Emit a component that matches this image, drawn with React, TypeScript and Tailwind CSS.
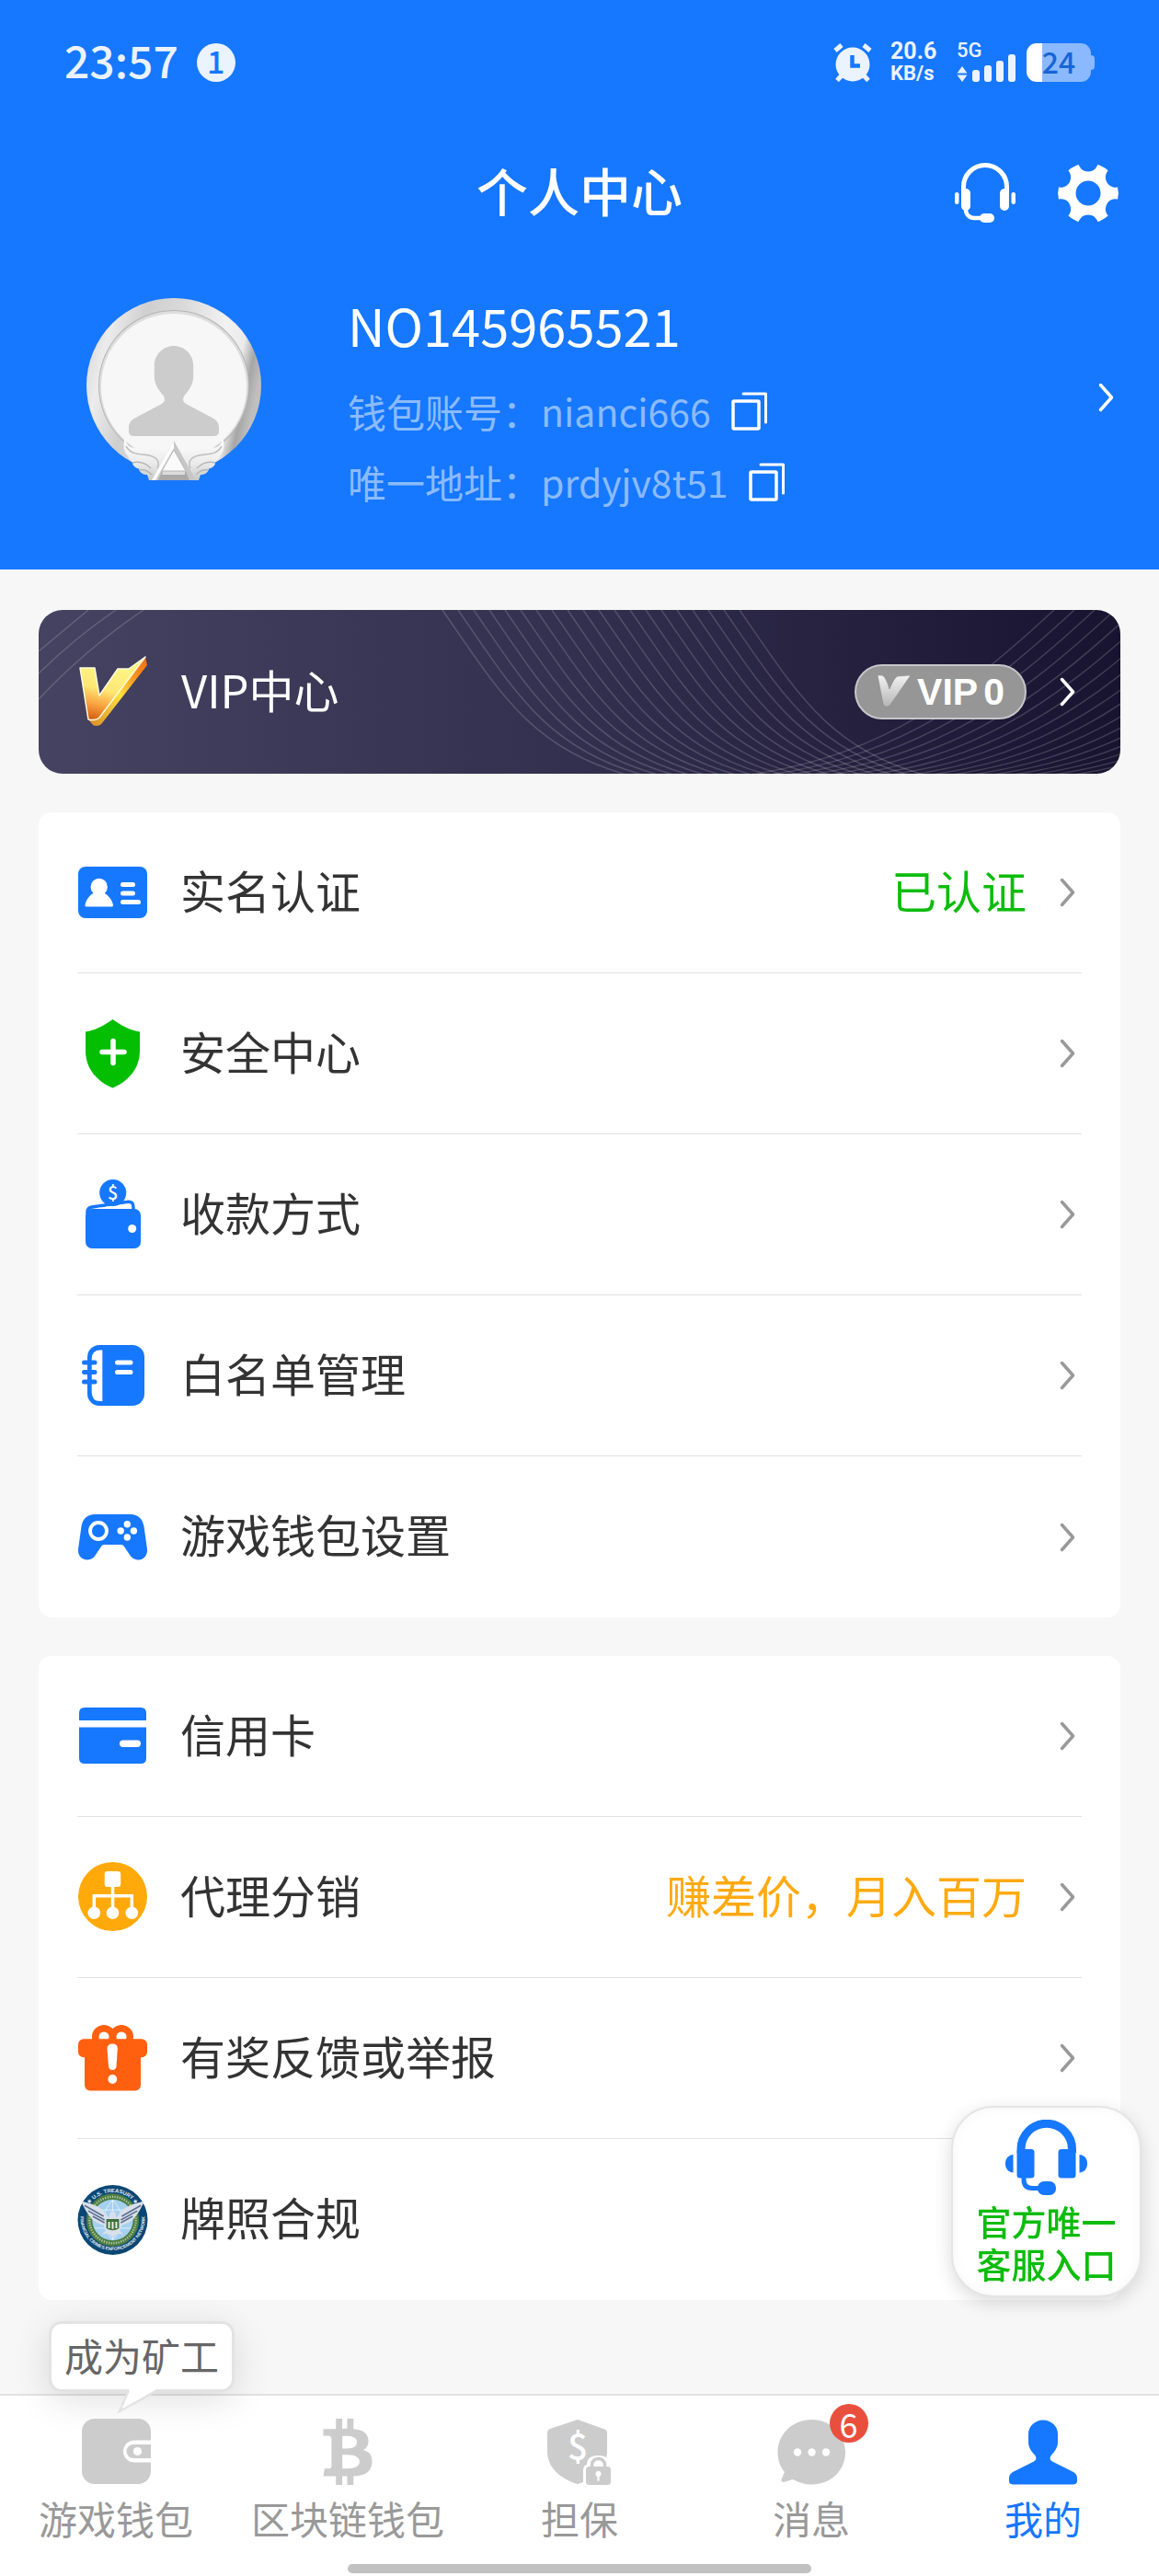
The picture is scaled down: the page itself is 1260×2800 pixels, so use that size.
import React from 'react';
import { FaBtc } from 'react-icons/fa';
import clsx from 'clsx';

interface MenuItem {
  id: string;
  label: string;
  icon: React.ReactNode;
  note?: string;
  noteClass?: string;
}

interface Tab {
  id: string;
  label: string;
  icon: React.ReactNode;
  badge?: number;
  active?: boolean;
}

const PERSON =
  'M37 0C28 0 21 7 21 15V24C21 30 25 35 28 38C30 41 30 43 27 45L5 56C1 58 0 61 0 63V66C0 69 2 70 5 70H69C72 70 74 69 74 66V63C74 61 73 58 69 56L47 45C44 43 44 41 46 38C49 35 53 30 53 24V15C53 7 46 0 37 0Z';

/* ---------- Status bar icons ---------- */

function AlarmIcon() {
  return (
    <svg width="42" height="42" viewBox="0 0 42 42" fill="none">
      <circle cx="21" cy="23" r="18.5" fill="#ebf3ff" />
      <path d="M2 8L9 2M40 8L33 2" stroke="#ebf3ff" strokeWidth="5" />
      <path d="M9 35L4 40.500M33 35L38 40.500" stroke="#ebf3ff" strokeWidth="5" />
      <path d="M20.500 13V24.500H29" stroke="#1677ff" strokeWidth="4.500" />
    </svg>
  );
}

function SignalIcon() {
  return (
    <svg width="64" height="30" viewBox="0 0 64 30" fill="#ebf3ff">
      <path d="M6 13L11.500 20.500H0.500Z" />
      <path d="M6 30L11.500 22.500H0.500Z" />
      <rect x="17" y="17" width="8" height="13" rx="3" />
      <rect x="30" y="12" width="8" height="18" rx="3" />
      <rect x="43" y="7" width="8" height="23" rx="3" />
      <rect x="56" y="0" width="8" height="30" rx="3" />
    </svg>
  );
}

/* ---------- Header icons ---------- */

function HeadsetIcon() {
  return (
    <svg width="66" height="66" viewBox="0 0 66 66" fill="#fff">
      <path d="M9.500 34V26A23.500 23.500 0 0 1 56.500 26V34" fill="none" stroke="#fff" strokeWidth="5" />
      <rect x="7" y="28" width="10" height="24" rx="5" />
      <rect x="49" y="28" width="10" height="24" rx="5" />
      <rect x="0" y="32" width="4.500" height="13" rx="2.200" />
      <rect x="61.500" y="32" width="4.500" height="13" rx="2.200" />
      <path d="M12 48V51A9 9 0 0 0 21 60H30" fill="none" stroke="#fff" strokeWidth="4.500" />
      <rect x="27" y="55" width="16" height="10" rx="5" />
    </svg>
  );
}

function GearIcon() {
  const valleys = [30, 90, 150, 210, 270, 330];
  return (
    <svg width="66" height="66" viewBox="-33 -33 66 66">
      <mask id="gear">
        <circle r="33" fill="#fff" />
        <circle r="13.500" fill="#000" />
        {valleys.map(a => (
          <circle key={a} cx="34.500" cy="0" r="11" fill="#000" transform={`rotate(${a})`} />
        ))}
      </mask>
      <circle r="33" fill="#fff" mask="url(#gear)" />
    </svg>
  );
}

function CopyIcon() {
  return (
    <svg width="40" height="42" viewBox="0 0 40 42" fill="none" stroke="#fff">
      <rect x="2" y="10" width="28" height="30" rx="1" strokeWidth="3.500" />
      <path d="M13 2H37.500V33" strokeWidth="3" strokeLinecap="round" strokeLinejoin="round" />
    </svg>
  );
}

function Chevron({ className }: { className?: string }) {
  return (
    <svg width="24" height="32" viewBox="0 0 24 32" fill="none" stroke="currentColor" strokeWidth="3.500" strokeLinecap="round" strokeLinejoin="round" className={clsx('shrink-0', className)}>
      <path d="M2.500 2.500L14.500 16L2.500 29.500" />
    </svg>
  );
}

function Avatar() {
  return (
    <svg width="190" height="200" viewBox="0 0 190 200" className="shrink-0">
      <defs>
        <linearGradient id="ring" x1="0" y1="0.2" x2="1" y2="0.42">
          <stop offset="0" stopColor="#d6d6d6" />
          <stop offset="0.12" stopColor="#ececec" />
          <stop offset="0.3" stopColor="#cfcfcf" />
          <stop offset="0.5" stopColor="#dadada" />
          <stop offset="0.75" stopColor="#f2f2f2" />
          <stop offset="0.87" stopColor="#ebebeb" />
          <stop offset="0.94" stopColor="#a6a6a6" />
          <stop offset="1" stopColor="#bfbfbf" />
        </linearGradient>
        <linearGradient id="wing" x1="0" y1="0" x2="0" y2="1">
          <stop offset="0" stopColor="#ffffff" />
          <stop offset="0.6" stopColor="#ebebeb" />
          <stop offset="1" stopColor="#c8c8c8" />
        </linearGradient>
      </defs>
      <circle cx="95" cy="95" r="95" fill="url(#ring)" />
      <circle cx="95" cy="95" r="82" fill="#b4b4b4" />
      <circle cx="95" cy="95" r="81" fill="#dedede" />
      <circle cx="95" cy="96" r="79" fill="#f7f7f7" />
      <svg x="46" y="52" width="98" height="98" viewBox="0 0 74 70" preserveAspectRatio="none">
        <path d={PERSON} fill="#ccc" />
      </svg>
      {/* blue gap under the ring, then the wings over it */}
      <path d="M44 175L68 199H122L146 175L138 200H52Z" fill="#1677ff" />
      <path d="M42 152C43 160 48 163 55 163L72 163C78 162 82 164 85 168L95 155L105 168C108 164 112 162 118 163L135 163C142 163 147 160 148 152C151 160 149 168 145 172C144 175 141 178 138 179H140C140 182 137 185 131 186H133C132 190 128 192 124 192L122 198H68L66 192C62 192 58 190 57 186H59C53 185 50 182 50 179H52C49 178 46 175 45 172C41 168 39 160 42 152Z" fill="url(#wing)" />
      <path d="M43 161C49 171 58 169 68 171C77 173 80 178 77 185M147 161C141 171 132 169 122 171C113 173 110 178 113 185" fill="none" stroke="#bdbdbd" strokeWidth="1.500" />
      <path d="M50 179C58 177 64 179 70 185M140 179C132 177 126 179 120 185M58 187C63 186 67 188 71 192M132 187C127 186 123 188 119 192" fill="none" stroke="#b5b5b5" strokeWidth="1.500" />
      <path d="M95 155L71 198H78L95 166L112 198H119Z" fill="#c6c6c6" />
      <path d="M95 155L71 198H75L95 163Z" fill="#fff" />
      <path d="M95 165L82 188H108Z" fill="#fafafa" stroke="#b9b9b9" strokeWidth="1" />
      <path d="M82 189H108L112 198H78Z" fill="#a9a9a9" />
      <path d="M83 189H107V192H82Z" fill="#dcdcdc" />
    </svg>
  );
}

/* ---------- VIP ---------- */

function VipWaves() {
  const left = Array.from({ length: 20 }, (_, i) => i * 17);
  const right = Array.from({ length: 17 }, (_, i) => i * 22);
  return (
    <svg viewBox="0 0 1176 178" preserveAspectRatio="none" fill="none" stroke="#fff" strokeOpacity="0.17" strokeWidth="1.500" className="absolute inset-0 h-full w-full">
      <path d="M54 0L0 45M84 0Q40 30 0 69M114 0Q52 42 0 97" />
      {left.map(x => (
        <path key={x} d={`M${439 + x} 0C${500 + x} 88 ${535 + x} 150 ${639 + x} 179`} />
      ))}
      {right.map(x => (
        <path key={x} d={`M${750 + x} 182C${900 + x} 165 ${985 + x} 110 ${1104 + x} 0`} />
      ))}
    </svg>
  );
}

function GoldV() {
  return (
    <svg width="76" height="78" viewBox="0 0 76 78" className="shrink-0">
      <defs>
        <linearGradient id="goldFace" x1="0.4" y1="0" x2="0.15" y2="1">
          <stop offset="0.15" stopColor="#fff383" />
          <stop offset="0.5" stopColor="#ffe774" />
          <stop offset="0.75" stopColor="#f9a13f" />
          <stop offset="1" stopColor="#d0590f" />
        </linearGradient>
        <linearGradient id="goldSide" x1="1" y1="0" x2="0" y2="1">
          <stop offset="0" stopColor="#ef6c12" />
          <stop offset="0.25" stopColor="#f8941f" />
          <stop offset="0.5" stopColor="#ffe03c" />
          <stop offset="1" stopColor="#d98a2a" />
        </linearGradient>
      </defs>
      <path d="M72 1L74 10L25 73C23 76 18 77 15 75L10 69L30 50Z" fill="url(#goldSide)" />
      <path d="M1 13H17L22 43L42 14H54L72 1L22 67C19 70 13 70 10 69Z" fill="url(#goldFace)" stroke="#fffbe0" strokeWidth="1.500" strokeLinejoin="round" />
    </svg>
  );
}

function SilverV() {
  return (
    <svg width="38" height="36" viewBox="0 0 38 36">
      <defs>
        <linearGradient id="silver" x1="0" y1="0" x2="0" y2="1">
          <stop offset="0" stopColor="#f2f2f2" />
          <stop offset="1" stopColor="#b5b5b5" />
        </linearGradient>
      </defs>
      <path d="M1 0H6C9 1 12 8 14 15C17 8 20 2 23 1L37 0L15 32C13 35 8 35 7 31Z" fill="url(#silver)" stroke="#808080" strokeWidth="0.500" />
    </svg>
  );
}

/* ---------- Menu icons ---------- */

const icons = {
  idCard: (
    <svg width="76" height="56" viewBox="0 0 76 56" fill="#fff">
      <rect width="75" height="56" rx="8" fill="#1677ff" />
      <circle cx="22.700" cy="22" r="9.200" />
      <path d="M18 28H27C33 31 37 36 38 42Q38 43.500 36.500 43.500H9Q7 43.500 7.500 42C8.500 36 12 31 18 28Z" />
      <rect x="46" y="17" width="16" height="5" rx="2.500" />
      <rect x="46" y="26.500" width="16" height="5" rx="2.500" />
      <rect x="46" y="36" width="22" height="5" rx="2.500" />
    </svg>
  ),
  shield: (
    <svg width="60" height="75" viewBox="0 0 60 75">
      <path d="M29.500 0C20 7 10 12 0 13.500V34C0 55 14 68 29.500 74.500C45 68 59 55 59 34V13.500C49 12 39 7 29.500 0Z" fill="#04be02" />
      <path d="M30 23.500V47.500M18 35.500H42" stroke="#fff" strokeWidth="5.500" strokeLinecap="round" />
    </svg>
  ),
  payment: (
    <svg width="60" height="76" viewBox="0 0 60 76" fill="#1677ff">
      <path d="M2 37V35.500C2 32 4 30.500 7 30L45 24.500C50 23.500 52 26 52 30V34" fill="none" stroke="#1677ff" strokeWidth="3.500" />
      <path d="M8 32L22 29L22 33H7Z" />
      <rect y="32" width="60" height="43" rx="7" />
      <path d="M8 32C10 31 20 30 24 29.500C30 31 36 28 38 27.500L45 26.500Q49 26 49 30V32Z" fill="#fff" />
      <circle cx="29.700" cy="14.500" r="14.500" />
      <text x="29.700" y="22" textAnchor="middle" fill="#fff" fontSize="20" fontWeight="500" fontFamily="Noto Sans CJK SC, sans-serif">$</text>
      <circle cx="50.700" cy="53.500" r="4.500" fill="#fff" />
    </svg>
  ),
  notebook: (
    <svg width="68" height="66" viewBox="0 0 68 66">
      <rect x="6" width="62" height="66" rx="13" fill="#1677ff" />
      <path d="M22.300 5.500V61H20Q10.700 61 10.700 51V15Q10.700 5.500 20 5.500Z" fill="#fff" />
      <path d="M2.500 19H14M2.500 29.600H14M2.500 40H14" stroke="#1677ff" strokeWidth="5" strokeLinecap="round" />
      <path d="M38.500 19H53M38.500 29.600H53" stroke="#fff" strokeWidth="5" strokeLinecap="round" />
    </svg>
  ),
  gamepad: (
    <svg width="76" height="50" viewBox="0 0 76 50" fill="#fff">
      <path d="M18 0H57C65 0 70 5 71.500 13L75 38C75.500 45 71 49.500 66 49.500C61 49.500 58 47 56 44L50 35C49 33.500 48 33 46.500 33H28.500C27 33 26 33.500 25 35L19 44C17 47 14 49.500 10 49.500C4 49.500 -0.500 45 0 38L3.500 13C5 5 10 0 18 0Z" fill="#1677ff" />
      <circle cx="22" cy="18" r="9" fill="none" stroke="#fff" strokeWidth="3.800" />
      <circle cx="53.300" cy="10.800" r="3.700" />
      <circle cx="53.300" cy="25" r="3.700" />
      <circle cx="46.200" cy="18" r="3.700" />
      <circle cx="60.400" cy="18" r="3.700" />
    </svg>
  ),
  creditCard: (
    <svg width="74" height="62" viewBox="0 0 74 62">
      <path d="M0 14V6Q0 0 6 0H67Q73 0 73 6V14Z" fill="#1677ff" />
      <path d="M0 21.500H73V55Q73 61 67 61H6Q0 61 0 55Z" fill="#1677ff" />
      <rect x="44" y="35.500" width="23" height="7.500" rx="3.700" fill="#fff" />
    </svg>
  ),
  agency: (
    <svg width="76" height="76" viewBox="0 0 76 76" fill="#fff">
      <circle cx="37.500" cy="37.500" r="37.500" fill="#ffaa0a" />
      <rect x="28.700" y="10" width="17.500" height="17" rx="3" />
      <path d="M37.500 26V50M17.300 50V36.700H58.300V50" fill="none" stroke="#fff" strokeWidth="3.500" />
      <circle cx="17.300" cy="55.300" r="6.800" />
      <circle cx="37.500" cy="55.300" r="6.800" />
      <circle cx="58.300" cy="55.300" r="6.800" />
    </svg>
  ),
  gift: (
    <svg width="76" height="72" viewBox="0 0 76 72">
      <circle cx="28" cy="13" r="9.300" fill="none" stroke="#ff6010" strokeWidth="7.500" />
      <circle cx="47" cy="13" r="9.300" fill="none" stroke="#ff6010" strokeWidth="7.500" />
      <rect y="15.300" width="75" height="20" rx="6" fill="#ff6010" />
      <rect x="7" y="20" width="61" height="51.500" rx="6" fill="#ff6010" />
      <path d="M31.500 26Q31.500 20.500 37.200 20.500Q43 20.500 42.800 26L41.500 45Q41 49 37.200 49Q33.500 49 33 45Z" fill="#fff" />
      <circle cx="37.300" cy="59" r="4.900" fill="#fff" />
    </svg>
  ),
  seal: (
    <svg width="78" height="78" viewBox="-39 -39 78 78">
      <defs>
        <path id="sealTop" d="M-30.500 0A30.500 30.500 0 0 1 30.500 0" />
        <path id="sealBottom" d="M-35 -8A35.500 35.500 0 1 0 35 -8" />
      </defs>
      <circle r="38.500" fill="#0b4775" />
      <circle r="29" fill="#4c7c45" />
      <circle r="25.500" fill="none" stroke="#b9cf9c" strokeWidth="2.500" strokeDasharray="1.200 1.500" />
      <circle r="22.500" fill="#a5d0f0" />
      <path d="M-22 -2H22M-20 -11H20M-20 9H20M0 -22V22M0 -22Q-20 0 0 22M0 -22Q20 0 0 22" fill="none" stroke="#e3f2fc" strokeWidth="0.900" />
      <text fill="#e4eef5" fontSize="6" fontWeight="700" fontFamily="Liberation Sans, Arial, sans-serif">
        <textPath href="#sealTop" startOffset="50%" textAnchor="middle">★ U.S. TREASURY ★</textPath>
      </text>
      <text fill="#e4eef5" fontSize="5" fontWeight="700" fontFamily="Liberation Sans, Arial, sans-serif">
        <textPath href="#sealBottom" startOffset="50%" textAnchor="middle">FINANCIAL CRIMES ENFORCEMENT NETWORK</textPath>
      </text>
      {/* eagle */}
      <path d="M-35 -21C-26 -18 -18 -17 -11 -11Q-6 -6 -4 -2L-3 -8Q0 -12 3 -8L4 -2Q6 -6 11 -11C18 -17 26 -18 35 -21C32 -14 29 -9 26 -5C23 0 18 4 9 6L8 12L12 16L5 15L0 19L-5 15L-12 16L-8 12L-9 6C-18 4 -23 0 -26 -5C-29 -9 -32 -14 -35 -21Z" fill="#d9e0ea" />
      <path d="M-31 -16L-10 -4M-27 -10L-9 0M-22 -4L-9 3M31 -16L10 -4M27 -10L9 0M22 -4L9 3" stroke="#5d6f91" strokeWidth="1.600" />
      <path d="M-7 -1H7V9Q0 14 -7 9Z" fill="#3f6f37" />
      <path d="M-4 2V9M0 2V10M4 2V9" stroke="#e9efe0" strokeWidth="2" />
    </svg>
  ),
};

/* ---------- Tab icons ---------- */

const tabIcons = {
  wallet: (
    <svg width="75" height="72" viewBox="0 0 75 72">
      <rect width="75" height="71" rx="14" fill="#ccc" />
      <path d="M75 23.500H57A12 12 0 0 0 57 47.500H75Z" fill="#fff" />
      <path d="M75 28H56A7.500 7.500 0 0 0 56 43H75Z" fill="#ccc" />
      <circle cx="60.500" cy="35.500" r="4.600" fill="#fff" />
    </svg>
  ),
  bitcoin: <FaBtc size={72} color="#ccc" />,
  escrow: (
    <svg width="70" height="71" viewBox="0 0 70 71">
      <path d="M33 0L61 10C64 11 65 12 65 15V35C65 52 50 65 33 70C15 65 0 52 0 35V15C0 12 1 11 3 10Z" fill="#ccc" />
      <text x="33" y="44" textAnchor="middle" fill="#fff" fontSize="39" fontWeight="500" fontFamily="Noto Sans CJK SC, sans-serif">$</text>
      <path d="M39 71V55Q39 50 43 49Q43 39 55.500 39Q68 39 68 49V71Z" fill="#fff" />
      <rect x="42" y="51" width="27" height="20" rx="3.500" fill="#ccc" />
      <path d="M48.500 52V49A7 6.500 0 0 1 62.500 49V52" fill="none" stroke="#ccc" strokeWidth="3.500" />
      <circle cx="55.500" cy="59" r="3" fill="#fff" />
      <path d="M55.500 59V66" stroke="#fff" strokeWidth="2" strokeLinecap="round" />
    </svg>
  ),
  message: (
    <svg width="75" height="71" viewBox="0 0 75 71">
      <path d="M37.500 0C58 0 74 15.500 74 35.500S58 70.500 37.500 70.500C30 70.500 23 68.500 17 65L7 68Q4 68 4.500 65L8 57C3 51 0.500 44 0.500 35.500C0.500 15.500 17 0 37.500 0Z" fill="#ccc" />
      <circle cx="22" cy="35.500" r="4.200" fill="#fff" />
      <circle cx="37.500" cy="35.500" r="4.200" fill="#fff" />
      <circle cx="53" cy="35.500" r="4.200" fill="#fff" />
    </svg>
  ),
  me: (
    <svg width="74" height="71" viewBox="0 0 74 70">
      <path d={PERSON} fill="#1677ff" />
    </svg>
  ),
};

const accountMenu: MenuItem[] = [
  { id: 'verify', label: '实名认证', icon: icons.idCard, note: '已认证', noteClass: 'text-[#0dbc0d]' },
  { id: 'security', label: '安全中心', icon: icons.shield },
  { id: 'payment', label: '收款方式', icon: icons.payment },
  { id: 'whitelist', label: '白名单管理', icon: icons.notebook },
  { id: 'game', label: '游戏钱包设置', icon: icons.gamepad },
];

const serviceMenu: MenuItem[] = [
  { id: 'card', label: '信用卡', icon: icons.creditCard },
  { id: 'agency', label: '代理分销', icon: icons.agency, note: '赚差价，月入百万', noteClass: 'text-[#ffaa11]' },
  { id: 'report', label: '有奖反馈或举报', icon: icons.gift },
  { id: 'license', label: '牌照合规', icon: icons.seal },
];

const tabs: Tab[] = [
  { id: 'game', label: '游戏钱包', icon: tabIcons.wallet },
  { id: 'chain', label: '区块链钱包', icon: tabIcons.bitcoin },
  { id: 'escrow', label: '担保', icon: tabIcons.escrow },
  { id: 'message', label: '消息', icon: tabIcons.message, badge: 6 },
  { id: 'me', label: '我的', icon: tabIcons.me, active: true },
];

function StatusBar() {
  return (
    <div className="flex h-[136px] items-center justify-between px-[70px] text-[#ebf3ff]">
      <div className="flex items-center gap-5">
        <span className="pb-2 text-[48px] leading-none font-medium">23:57</span>
        <span className="flex h-[42px] w-[42px] items-center justify-center rounded-full bg-[#ebf3ff] pb-1 text-[34px] leading-none font-medium text-[#1677ff]">1</span>
      </div>
      <div className="flex items-center">
        <AlarmIcon />
        <div className="ml-5 flex w-[56px] flex-col font-[Roboto,sans-serif] text-[25px] leading-[24px] font-bold">
          <span>20.6</span>
          <span className="text-[22px]">KB/s</span>
        </div>
        <div className="relative ml-4 flex h-[42px] items-end">
          <span className="absolute -top-1 left-0 font-[Roboto,sans-serif] text-[22px] leading-[24px] font-medium">5G</span>
          <SignalIcon />
        </div>
        <div className="ml-3 flex items-center">
          <div className="flex h-[42px] w-[70px] items-center justify-center rounded-[11px] bg-linear-to-r from-white from-[24%] to-[#8bb9ff] to-[24%] pb-1 text-[32px] leading-none font-medium text-[#1765d8]">24</div>
          <div className="h-4 w-1 rounded-r bg-[#8bb9ff]" />
        </div>
      </div>
    </div>
  );
}

function CopyLine({ label, value }: { label: string; value: string }) {
  return (
    <div className="flex h-[77px] items-center text-[42px] leading-none text-[#8bbbff]">
      <span className="pb-2">{label}：</span>
      <span className="pb-2 text-[41px]">{value}</span>
      <button type="button" aria-label={`复制${label}`} className="mb-2 ml-[22px]">
        <CopyIcon />
      </button>
    </div>
  );
}

function Menu({ items }: { items: MenuItem[] }) {
  return (
    <section className="rounded-[14px] bg-white px-[42px]">
      {items.map(item => (
        <button
          key={item.id}
          type="button"
          className="flex h-[175px] w-full items-center border-b border-[#e2e2e2] text-[49px] leading-none text-[#333] last:border-b-0"
        >
          <span className="flex w-[77px] shrink-0 justify-center">{item.icon}</span>
          <span className="ml-[35px] pb-2">{item.label}</span>
          <span className={clsx('mr-9 ml-auto pb-2', item.noteClass)}>{item.note}</span>
          <Chevron className="text-[#999]" />
        </button>
      ))}
    </section>
  );
}

function SupportButton() {
  return (
    <button
      type="button"
      className="fixed right-[19px] bottom-[303px] flex w-[207px] flex-col items-center rounded-[46px] border-2 border-[#e5e5e5] bg-white pt-[13px] pb-3 text-[38px] leading-[46px] font-medium text-[#0dbc0d] shadow-[0_6px_20px_rgba(0,0,0,0.14),inset_0_0_14px_rgba(0,0,0,0.04)]"
    >
      <svg width="90" height="83" viewBox="0 0 90 83" fill="#1677ff" className="mb-1">
        <path d="M17 36V32A27.700 27.700 0 0 1 72.500 32V36" fill="none" stroke="#1677ff" strokeWidth="9" />
        <rect x="12.500" y="32" width="19" height="31.500" rx="3.500" />
        <rect x="57.500" y="32" width="19" height="31.500" rx="3.500" />
        <path d="M8.500 38V57.500C3 57 0 53 0 47.700S3 38.500 8.500 38Z" />
        <path d="M80.500 38V57.500C86 57 89 53 89 47.700S86 38.500 80.500 38Z" />
        <path d="M20 62V65Q20 74.500 29 74.500H38" fill="none" stroke="#1677ff" strokeWidth="5" />
        <rect x="35" y="67" width="20" height="15" rx="7" />
      </svg>
      <span>官方唯一</span>
      <span>客服入口</span>
    </button>
  );
}

function TabBar() {
  return (
    <nav className="relative border-t-2 border-[#e2e2e2] bg-white">
      {/* Tooltip above the first tab */}
      <div className="absolute bottom-full left-[53px] mb-1 rounded-[14px] border-[3px] border-[#e3e3e3] bg-white px-[14px] pb-1 text-[42px] leading-[67px] text-[#666] shadow-[0_8px_40px_rgba(0,0,0,0.13)]">
        成为矿工
        <svg width="48" height="28" viewBox="0 0 48 28" className="absolute top-full left-[70px]">
          <path d="M14 0L4 24L44 0Z" fill="#fff" />
          <path d="M14 1L4 24L44 2" fill="none" stroke="#e3e3e3" strokeWidth="2.500" />
        </svg>
      </div>
      <div className="grid grid-cols-5 pt-[25px]">
        {tabs.map(tab => (
          <a key={tab.id} href={`#${tab.id}`} className={clsx('flex flex-col items-center', tab.active ? 'text-[#1677ff]' : 'text-[#999]')}>
            <span className="relative flex h-[72px] items-center">
              {tab.icon}
              {tab.badge && (
                <span className="absolute -top-4 -right-6 flex h-[42px] w-[42px] items-center justify-center rounded-full bg-[#e94f3d] text-[36px] leading-none text-white">
                  {tab.badge}
                </span>
              )}
            </span>
            <span className="mt-2 text-[42px] leading-[56px]">{tab.label}</span>
          </a>
        ))}
      </div>
      <div className="mx-auto mt-[22px] mb-[3px] h-[10px] w-2/5 rounded-full bg-[#c1c1c1]" />
    </nav>
  );
}

export default function App() {
  return (
    <div className="flex min-h-screen flex-col bg-[#f7f7f7] font-['Noto_Sans_CJK_SC',sans-serif]">
      <header className="bg-[#1677ff] text-white">
        <StatusBar />
        <div className="grid h-[148px] grid-cols-[1fr_auto_1fr] items-center">
          <h1 className="col-start-2 pb-2 text-[56px] leading-none font-medium">个人中心</h1>
          <div className="flex justify-end gap-[46px] pr-11">
            <button type="button" aria-label="客服">
              <HeadsetIcon />
            </button>
            <button type="button" aria-label="设置">
              <GearIcon />
            </button>
          </div>
        </div>
        <div className="flex items-start pt-10 pr-[42px] pb-[53px] pl-[94px]">
          <Avatar />
          <div className="ml-[94px] flex-1">
            <h2 className="mb-[30px] text-[56px] leading-[58px]">NO145965521</h2>
            <CopyLine label="钱包账号" value="nianci666" />
            <CopyLine label="唯一地址" value="prdyjv8t51" />
          </div>
          <button type="button" aria-label="个人资料" className="mt-23">
            <Chevron />
          </button>
        </div>
      </header>

      <main className="flex flex-1 flex-col gap-[42px] px-[42px] pt-11 pb-[102px]">
        <button type="button" className="relative flex h-[178px] items-center overflow-hidden rounded-[26px] bg-linear-to-r from-[#454361] via-[#332f4f] via-50% to-[#18132f] pr-[42px] pl-11 text-white">
          <VipWaves />
          <span className="relative flex w-full items-center">
            <GoldV />
            <span className="ml-[35px] pb-2 text-[49px] leading-none">VIP中心</span>
            <span className="mr-9 ml-auto flex h-[60px] items-center gap-[6px] rounded-full border-2 border-[#c6c6ca] bg-[#969696] px-[22px] font-['Liberation_Sans',Arial,sans-serif] text-[41px] leading-none font-bold">
              <SilverV />
              <span>VIP</span>
              <span>0</span>
            </span>
            <Chevron />
          </span>
        </button>
        <Menu items={accountMenu} />
        <Menu items={serviceMenu} />
      </main>

      <TabBar />
      <SupportButton />
    </div>
  );
}
